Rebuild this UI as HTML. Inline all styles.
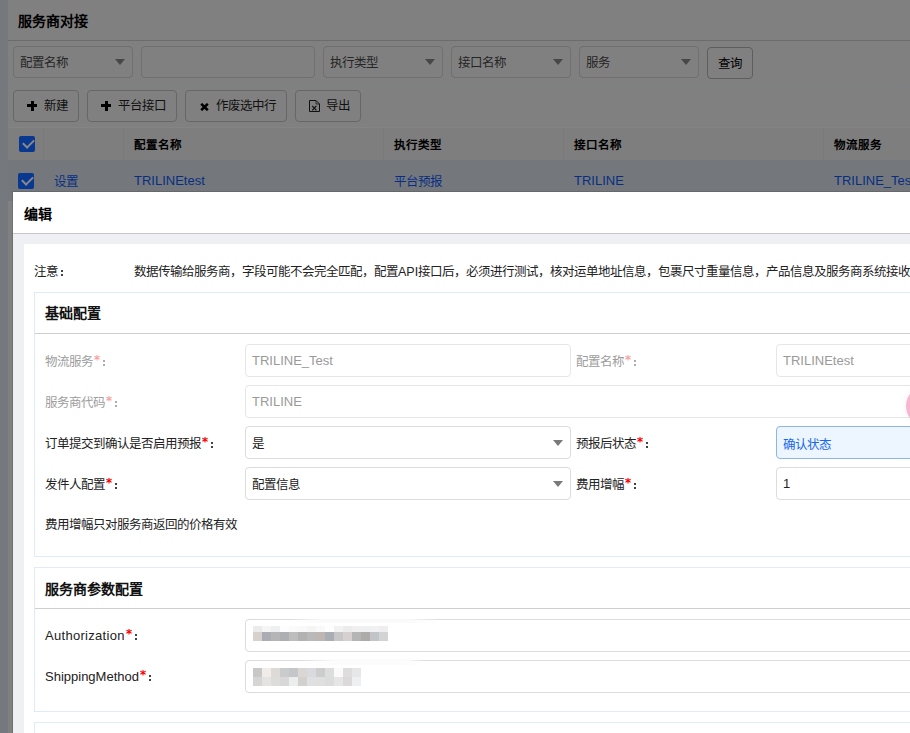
<!DOCTYPE html>
<html lang="zh-CN"><head><meta charset="utf-8">
<style>
*{box-sizing:border-box;margin:0;padding:0}
html,body{width:910px;height:733px;overflow:hidden}
body{position:relative;background:#808080;font-family:"Liberation Sans",sans-serif;font-size:12px;color:#333}
.a{position:absolute}
.t{position:absolute;white-space:nowrap;line-height:16px}
.c{font-size:12.5px;letter-spacing:-1px}
.b{font-weight:bold;font-size:11.5px;letter-spacing:1px}
.sel{position:absolute;height:32px;border:1px solid #6f6f6f;border-radius:4px}
.arr{position:absolute;width:0;height:0;border-left:5px solid transparent;border-right:5px solid transparent;border-top:6px solid #474747}
.btn{position:absolute;height:32px;border:1px solid #676767;border-radius:4px}
.cb{position:absolute;width:16px;height:16px;background:#083890;border-radius:2px}
.cb:after{content:"";position:absolute;left:4px;top:3px;width:9px;height:5px;border-left:2px solid #8a8a8a;border-bottom:2px solid #8a8a8a;transform:rotate(-45deg)}
.vl{position:absolute;width:1px;background:#7a7a7a}
.inp{position:absolute;height:32px;border:1px solid #dcdcdc;border-radius:4px;background:#fff}
.dis{color:#9d9d9d}
.st{display:inline-block;vertical-align:top;color:#f00}
.co{display:inline-block;position:relative;width:6px;height:16px;vertical-align:top}
.co:before,.co:after{content:"";position:absolute;left:3px;width:2px;height:2px;background:currentColor;opacity:.85}
.co:before{top:6px}.co:after{top:10px}
.dis .st{color:#f7a3a3}
.fs{position:absolute;left:34px;width:900px;border:1px solid #e1ebf5;background:#fff}
.lg{position:absolute;left:10px;font-weight:bold;font-size:14px;line-height:18px;color:#111;white-space:nowrap}
.lk{color:#082e82}
.mo{position:absolute;background:#c9c9c9}
</style></head><body>
<!-- background page -->
<div class="a" style="left:0;top:0;width:8px;height:733px;background:#75797d"></div>
<div class="t" style="left:18px;top:12px;font-size:14px;font-weight:bold;color:#000;line-height:18px">服务商对接</div>
<div class="a" style="left:8px;top:40px;width:902px;height:1px;background:#6c6c6c"></div>

<div class="sel" style="left:13px;top:46px;width:120px"><div class="t c" style="left:6px;top:8px;color:#262626">配置名称</div><div class="arr" style="left:101px;top:12px"></div></div>
<div class="sel" style="left:141px;top:46px;width:174px"></div>
<div class="sel" style="left:323px;top:46px;width:120px"><div class="t c" style="left:6px;top:8px;color:#262626">执行类型</div><div class="arr" style="left:101px;top:12px"></div></div>
<div class="sel" style="left:451px;top:46px;width:120px"><div class="t c" style="left:6px;top:8px;color:#262626">接口名称</div><div class="arr" style="left:101px;top:12px"></div></div>
<div class="sel" style="left:579px;top:46px;width:120px"><div class="t c" style="left:6px;top:8px;color:#262626">服务</div><div class="arr" style="left:101px;top:12px"></div></div>
<div class="btn" style="left:707px;top:47px;width:46px;border-color:#5e5e5e"><div class="t c" style="left:10px;top:8px;color:#000">查询</div></div>
<div class="a" style="left:8px;top:84px;width:902px;height:1px;background:#7c8085"></div>

<div class="btn" style="left:13px;top:90px;width:66px">
  <div class="a" style="left:13px;top:13px;width:10px;height:3px;background:#000"></div><div class="a" style="left:16.5px;top:9.5px;width:3px;height:10px;background:#000"></div>
  <div class="t c" style="left:30px;top:7px;color:#111">新建</div></div>
<div class="btn" style="left:87px;top:90px;width:90px">
  <div class="a" style="left:13px;top:13px;width:10px;height:3px;background:#000"></div><div class="a" style="left:16.5px;top:9.5px;width:3px;height:10px;background:#000"></div>
  <div class="t c" style="left:30px;top:7px;color:#111">平台接口</div></div>
<div class="btn" style="left:185px;top:90px;width:102px">
  <svg class="a" style="left:14px;top:12px" width="9" height="8" viewBox="0 0 9 8"><path d="M1.2 0.8 L7.8 7.2 M7.8 0.8 L1.2 7.2" stroke="#000" stroke-width="2.6"/></svg>
  <div class="t c" style="left:30px;top:7px;color:#111">作废选中行</div></div>
<div class="btn" style="left:295px;top:90px;width:66px">
  <svg class="a" style="left:13px;top:9px" width="12" height="13" viewBox="0 0 12 13"><path d="M0.5 0.5 H7 L10.5 4 V11.5 H0.5 Z" fill="none" stroke="#111" stroke-width="1"/><path d="M7 0.5 V4 H10.5" fill="none" stroke="#111" stroke-width="0.7"/><path d="M3.2 5.8 L7.4 10.4 M7.4 5.8 L3.2 10.4" stroke="#111" stroke-width="1.2"/></svg>
  <div class="t c" style="left:30px;top:7px;color:#111">导出</div></div>

<!-- table -->
<div class="a" style="left:8px;top:127px;width:902px;height:33px;background:#7e7e7e;border-top:1px solid #848484"></div>
<div class="vl" style="left:43px;top:128px;height:32px"></div>
<div class="vl" style="left:123px;top:128px;height:32px"></div>
<div class="vl" style="left:383px;top:128px;height:32px"></div>
<div class="vl" style="left:563px;top:128px;height:32px"></div>
<div class="vl" style="left:823px;top:128px;height:32px"></div>
<div class="cb" style="left:19px;top:136px"></div>
<div class="t b" style="left:134px;top:137px;color:#000">配置名称</div>
<div class="t b" style="left:394px;top:137px;color:#000">执行类型</div>
<div class="t b" style="left:574px;top:137px;color:#000">接口名称</div>
<div class="t b" style="left:834px;top:137px;color:#000">物流服务</div>
<div class="a" style="left:8px;top:160px;width:902px;height:41px;background:#74787d"></div>
<div class="cb" style="left:18px;top:173px"></div>
<div class="t c lk" style="left:54px;top:174px">设置</div>
<div class="t lk" style="left:134px;top:173px;font-size:13px">TRILINEtest</div>
<div class="t c lk" style="left:394px;top:174px">平台预报</div>
<div class="t lk" style="left:574px;top:173px;font-size:13px">TRILINE</div>
<div class="t lk" style="left:834px;top:173px;font-size:13px">TRILINE_Test</div>

<!-- modal -->
<div class="a" style="left:12px;top:191px;width:920px;height:560px;background:rgba(0,0,0,.12)"></div>
<div class="a" style="left:13px;top:192px;width:920px;height:560px;background:#fff"></div>
<div class="t" style="left:24px;top:205px;font-size:14px;font-weight:bold;color:#000;line-height:18px">编辑</div>
<div class="a" style="left:13px;top:233px;width:900px;height:1px;background:#c8c8c8"></div>
<div class="a" style="left:13px;top:234px;width:900px;height:500px;background:#eef0f3"></div>
<div class="a" style="left:24px;top:244px;width:900px;height:500px;background:#fff"></div>
<div class="t c" style="left:34px;top:264px;color:#222">注意<span class="co"></span></div>
<div class="t c" style="left:134px;top:264px;color:#222">数据传输给服务商，字段可能不会完全匹配，配置<span style="letter-spacing:0">API</span>接口后，必须进行测试，核对运单地址信息，包裹尺寸重量信息，产品信息及服务商系统接收</div>

<!-- fieldset 1 -->
<div class="fs" style="top:292px;height:265px">
  <div class="lg" style="top:11px">基础配置</div>
  <div class="a" style="left:0;top:40px;width:900px;height:1px;background:#cfcfcf"></div>
</div>
<div class="t c dis" style="left:45px;top:354px">物流服务<svg class="st" width="7" height="16" viewBox="0 0 7 16"><path d="M4 1 V6.6 M1.4 2.3 L6.6 5.3 M1.4 5.3 L6.6 2.3" stroke="currentColor" stroke-width="1.1"/></svg><span class="co"></span></div>
<div class="inp" style="left:245px;top:344px;width:326px;height:33px;border-color:#e6e6e6"><div class="t" style="left:6px;top:8px;color:#9a9a9a;font-size:13px">TRILINE_Test</div></div>
<div class="t c dis" style="left:576px;top:354px">配置名称<svg class="st" width="7" height="16" viewBox="0 0 7 16"><path d="M4 1 V6.6 M1.4 2.3 L6.6 5.3 M1.4 5.3 L6.6 2.3" stroke="currentColor" stroke-width="1.1"/></svg><span class="co"></span></div>
<div class="inp" style="left:776px;top:344px;width:300px;height:33px;border-color:#e6e6e6"><div class="t" style="left:6px;top:8px;color:#9a9a9a;font-size:13px">TRILINEtest</div></div>

<div class="t c dis" style="left:45px;top:395px">服务商代码<svg class="st" width="7" height="16" viewBox="0 0 7 16"><path d="M4 1 V6.6 M1.4 2.3 L6.6 5.3 M1.4 5.3 L6.6 2.3" stroke="currentColor" stroke-width="1.1"/></svg><span class="co"></span></div>
<div class="inp" style="left:245px;top:385px;width:700px;height:33px;border-color:#e6e6e6"><div class="t" style="left:6px;top:8px;color:#9a9a9a;font-size:13px">TRILINE</div></div>

<div class="t c" style="left:45px;top:436px;color:#222">订单提交到确认是否启用预报<svg class="st" width="7" height="16" viewBox="0 0 7 16"><path d="M4 1 V6.6 M1.4 2.3 L6.6 5.3 M1.4 5.3 L6.6 2.3" stroke="currentColor" stroke-width="1.1"/></svg><span class="co"></span></div>
<div class="inp" style="left:245px;top:426px;width:326px;height:33px"><div class="t c" style="left:6px;top:9px;color:#222">是</div><div class="arr" style="left:307px;top:13px;border-top-color:#7a7a7a"></div></div>
<div class="t c" style="left:576px;top:436px;color:#222">预报后状态<svg class="st" width="7" height="16" viewBox="0 0 7 16"><path d="M4 1 V6.6 M1.4 2.3 L6.6 5.3 M1.4 5.3 L6.6 2.3" stroke="currentColor" stroke-width="1.1"/></svg><span class="co"></span></div>
<div class="inp" style="left:776px;top:426px;width:300px;height:33px;background:#edf5fe;border-color:#8cb6e6"><div class="t c" style="left:6px;top:10px;color:#1766f0">确认状态</div></div>

<div class="t c" style="left:45px;top:477px;color:#222">发件人配置<svg class="st" width="7" height="16" viewBox="0 0 7 16"><path d="M4 1 V6.6 M1.4 2.3 L6.6 5.3 M1.4 5.3 L6.6 2.3" stroke="currentColor" stroke-width="1.1"/></svg><span class="co"></span></div>
<div class="inp" style="left:245px;top:467px;width:326px;height:33px"><div class="t c" style="left:6px;top:9px;color:#222">配置信息</div><div class="arr" style="left:307px;top:13px;border-top-color:#7a7a7a"></div></div>
<div class="t c" style="left:576px;top:477px;color:#222">费用增幅<svg class="st" width="7" height="16" viewBox="0 0 7 16"><path d="M4 1 V6.6 M1.4 2.3 L6.6 5.3 M1.4 5.3 L6.6 2.3" stroke="currentColor" stroke-width="1.1"/></svg><span class="co"></span></div>
<div class="inp" style="left:776px;top:467px;width:300px;height:33px"><div class="t" style="left:6px;top:8px;color:#222;font-size:13px">1</div></div>

<div class="t c" style="left:45px;top:517px;color:#222">费用增幅只对服务商返回的价格有效</div>

<!-- fieldset 2 -->
<div class="fs" style="top:567px;height:145px">
  <div class="lg" style="top:12px">服务商参数配置</div>
  <div class="a" style="left:0;top:40px;width:900px;height:1px;background:#cfcfcf"></div>
</div>
<div class="t" style="left:45px;top:628px;font-size:13px;letter-spacing:0.3px;color:#222">Authorization<svg class="st" width="7" height="16" viewBox="0 0 7 16"><path d="M4 1 V6.6 M1.4 2.3 L6.6 5.3 M1.4 5.3 L6.6 2.3" stroke="currentColor" stroke-width="1.1"/></svg><span class="co"></span></div>
<div class="inp" style="left:245px;top:619px;width:700px;height:33px"></div>
<div class="t" style="left:45px;top:669px;font-size:13px;color:#222">ShippingMethod<svg class="st" width="7" height="16" viewBox="0 0 7 16"><path d="M4 1 V6.6 M1.4 2.3 L6.6 5.3 M1.4 5.3 L6.6 2.3" stroke="currentColor" stroke-width="1.1"/></svg><span class="co"></span></div>
<div class="inp" style="left:245px;top:660px;width:700px;height:33px"></div>

<!-- mosaic -->
<div class="a" style="left:253px;top:626px;width:9px;height:6px;background:#ebebeb"></div>
<div class="a" style="left:262px;top:626px;width:9px;height:6px;background:#f5f5f5"></div>
<div class="a" style="left:271px;top:626px;width:9px;height:6px;background:#eeeff1"></div>
<div class="a" style="left:280px;top:626px;width:9px;height:6px;background:#fdfdfd"></div>
<div class="a" style="left:289px;top:626px;width:9px;height:6px;background:#fafafa"></div>
<div class="a" style="left:298px;top:626px;width:9px;height:6px;background:#f9f9f9"></div>
<div class="a" style="left:307px;top:626px;width:9px;height:6px;background:#f7f5f4"></div>
<div class="a" style="left:316px;top:626px;width:9px;height:6px;background:#f8f9fa"></div>
<div class="a" style="left:325px;top:626px;width:9px;height:6px;background:#fefefe"></div>
<div class="a" style="left:334px;top:626px;width:9px;height:6px;background:#f2f2f2"></div>
<div class="a" style="left:343px;top:626px;width:9px;height:6px;background:#ececec"></div>
<div class="a" style="left:352px;top:626px;width:9px;height:6px;background:#f0f0f0"></div>
<div class="a" style="left:361px;top:626px;width:9px;height:6px;background:#eff0f1"></div>
<div class="a" style="left:370px;top:626px;width:9px;height:6px;background:#f0f1f2"></div>
<div class="a" style="left:379px;top:626px;width:9px;height:6px;background:#eeeeee"></div>
<div class="a" style="left:253px;top:632px;width:9px;height:9px;background:#d7d0cd"></div>
<div class="a" style="left:262px;top:632px;width:9px;height:9px;background:#aaaeb4"></div>
<div class="a" style="left:271px;top:632px;width:9px;height:9px;background:#b5b5b5"></div>
<div class="a" style="left:280px;top:632px;width:9px;height:9px;background:#adafb2"></div>
<div class="a" style="left:289px;top:632px;width:9px;height:9px;background:#bdbdbd"></div>
<div class="a" style="left:298px;top:632px;width:9px;height:9px;background:#b3b2b3"></div>
<div class="a" style="left:307px;top:632px;width:9px;height:9px;background:#b9b9b9"></div>
<div class="a" style="left:316px;top:632px;width:9px;height:9px;background:#bdb6b3"></div>
<div class="a" style="left:325px;top:632px;width:9px;height:9px;background:#a9aeb5"></div>
<div class="a" style="left:334px;top:632px;width:9px;height:9px;background:#c7c7c8"></div>
<div class="a" style="left:343px;top:632px;width:9px;height:9px;background:#d6d1d0"></div>
<div class="a" style="left:352px;top:632px;width:9px;height:9px;background:#b5b5b5"></div>
<div class="a" style="left:361px;top:632px;width:9px;height:9px;background:#adaaa8"></div>
<div class="a" style="left:370px;top:632px;width:9px;height:9px;background:#c2c4c8"></div>
<div class="a" style="left:379px;top:632px;width:9px;height:9px;background:#d2d4d4"></div>
<div class="a" style="left:253px;top:668px;width:9px;height:9px;background:#c8c8c8"></div>
<div class="a" style="left:262px;top:668px;width:9px;height:9px;background:#f0ecea"></div>
<div class="a" style="left:271px;top:668px;width:9px;height:9px;background:#dedad8"></div>
<div class="a" style="left:280px;top:668px;width:9px;height:9px;background:#c9cbcd"></div>
<div class="a" style="left:289px;top:668px;width:9px;height:9px;background:#c5c6c8"></div>
<div class="a" style="left:298px;top:668px;width:9px;height:9px;background:#d9d6d3"></div>
<div class="a" style="left:307px;top:668px;width:9px;height:9px;background:#d8dadd"></div>
<div class="a" style="left:316px;top:668px;width:9px;height:9px;background:#cdcdcd"></div>
<div class="a" style="left:325px;top:668px;width:9px;height:9px;background:#dcdedd"></div>
<div class="a" style="left:334px;top:668px;width:9px;height:9px;background:#fbfaf8"></div>
<div class="a" style="left:343px;top:668px;width:9px;height:9px;background:#dedddd"></div>
<div class="a" style="left:352px;top:668px;width:9px;height:9px;background:#e6e7e9"></div>
<div class="a" style="left:253px;top:677px;width:9px;height:9px;background:#d5d5d5"></div>
<div class="a" style="left:262px;top:677px;width:9px;height:9px;background:#e5e3e1"></div>
<div class="a" style="left:271px;top:677px;width:9px;height:9px;background:#dcdcdb"></div>
<div class="a" style="left:280px;top:677px;width:9px;height:9px;background:#d8d8d8"></div>
<div class="a" style="left:289px;top:677px;width:9px;height:9px;background:#eceeee"></div>
<div class="a" style="left:298px;top:677px;width:9px;height:9px;background:#d3d1ce"></div>
<div class="a" style="left:307px;top:677px;width:9px;height:9px;background:#dfe0e2"></div>
<div class="a" style="left:316px;top:677px;width:9px;height:9px;background:#dfdfdf"></div>
<div class="a" style="left:325px;top:677px;width:9px;height:9px;background:#dcdcdc"></div>
<div class="a" style="left:334px;top:677px;width:9px;height:9px;background:#e6e6e6"></div>
<div class="a" style="left:343px;top:677px;width:9px;height:9px;background:#dcdad8"></div>
<div class="a" style="left:352px;top:677px;width:9px;height:9px;background:#eeeff1"></div>
<div class="a" style="left:290px;top:619px;width:150px;height:4px;background:linear-gradient(90deg,rgba(255,255,255,0),rgba(250,250,250,.9) 20%,rgba(250,250,250,.9) 80%,rgba(255,255,255,0))"></div>
<div class="a" style="left:300px;top:659px;width:125px;height:6px;background:linear-gradient(90deg,rgba(252,252,252,0),#fcfcfc 30%,#fcfcfc 85%,rgba(252,252,252,0))"></div>
<!-- fieldset 3 -->
<div class="fs" style="top:722px;height:40px"></div>

<!-- pink circle -->
<div class="a" style="left:906px;top:386px;width:40px;height:40px;border-radius:50%;background:#f8b4d0;box-shadow:0 0 10px rgba(0,0,0,.06)"></div>
</body></html>
